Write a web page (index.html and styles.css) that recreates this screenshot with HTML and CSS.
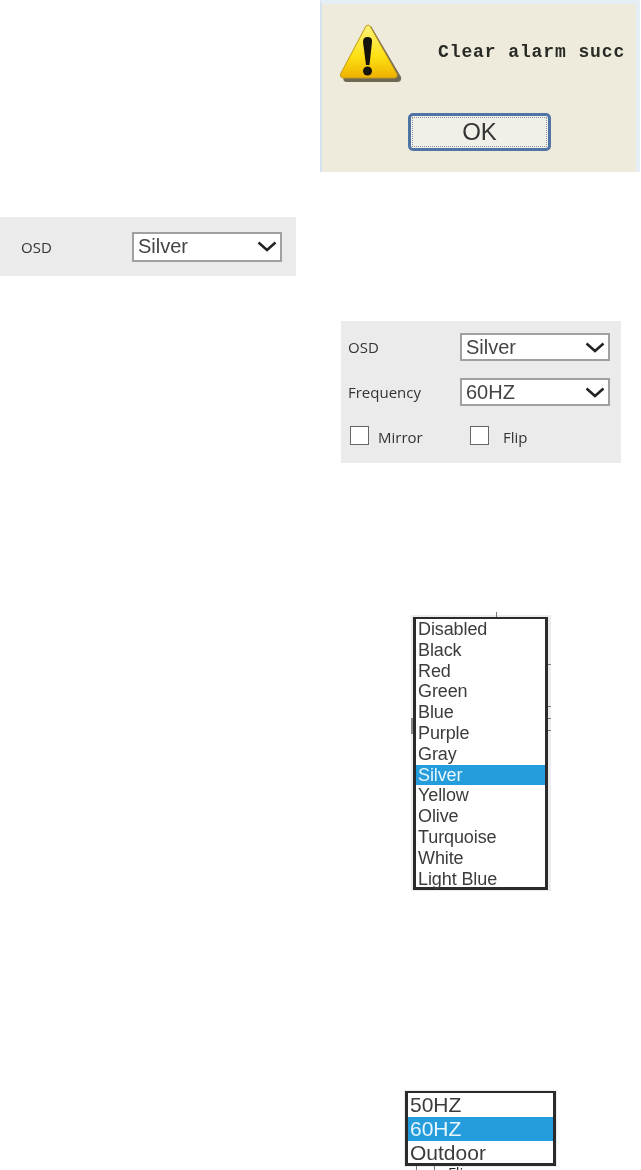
FILE: index.html
```html
<!DOCTYPE html>
<html lang="en">
<head>
  <meta charset="UTF-8" />
  <title>OSD settings</title>
  <link rel="stylesheet" href="styles.css">
</head>
<body>

  <!-- Alarm dialog -->
  <div class="dialog">
    <div class="dialog-top">
      <svg class="warn-icon" width="66" height="66" viewBox="0 0 66 66">
        <defs>
          <linearGradient id="warnFill" x1="0" y1="0" x2="0" y2="1">
            <stop offset="0" stop-color="#fff27a" />
            <stop offset="0.6" stop-color="#fde012" />
            <stop offset="1" stop-color="#eeb000" />
          </linearGradient>
        </defs>
        <path d="M33 4 L63 55 Q64 60 59 60 L8 60 Q4 59 6 55 Z" fill="#4d4630" opacity="0.8" />
        <path d="M28 4 Q30 2 32 4 L59 52 Q60 56 56 56 L5 56 Q1 55 3 51 Z" fill="url(#warnFill)" stroke="#c29a18" stroke-width="1" />
        <path d="M25 20 Q25 15 29.500 15 Q34.500 15 34 20 L31.500 43 L28 43 Z" fill="#15130c" />
        <circle cx="29.500" cy="49" r="4.500" fill="#15130c" />
      </svg>
      <span class="dialog-msg">Clear alarm succ</span>
    </div>
    <div class="ok-btn"><span class="ok-inner">OK</span></div>
  </div>

  <!-- OSD only -->
  <div class="panel panel-small">
    <span class="lbl">OSD</span>
    <div class="select">
      <span>Silver</span>
      <svg width="20" height="11" viewBox="0 0 20 11"><path d="M1.500 1.500 L10 9 L18.500 1.500" fill="none" stroke="#222" stroke-width="2.500" /></svg>
    </div>
  </div>

  <!-- OSD + frequency -->
  <div class="panel panel-big">
    <div class="row">
      <span class="lbl">OSD</span>
      <div class="select">
        <span>Silver</span>
        <svg width="20" height="11" viewBox="0 0 20 11"><path d="M1.500 1.500 L10 9 L18.500 1.500" fill="none" stroke="#222" stroke-width="2.500" /></svg>
      </div>
    </div>
    <div class="row">
      <span class="lbl">Frequency</span>
      <div class="select">
        <span>60HZ</span>
        <svg width="20" height="11" viewBox="0 0 20 11"><path d="M1.500 1.500 L10 9 L18.500 1.500" fill="none" stroke="#222" stroke-width="2.500" /></svg>
      </div>
    </div>
    <div class="checks">
      <span class="check"></span><span class="lbl mirror">Mirror</span>
      <span class="check"></span><span class="lbl flip">Flip</span>
    </div>
  </div>

  <!-- Colour dropdown -->
  <div class="list-wrap list-wrap-colors">
    <i class="tick tick-top"></i>
    <i class="tick tick-r1"></i>
    <i class="tick tick-r2"></i>
    <i class="tick tick-r3"></i>
    <i class="tick tick-r4"></i>
    <i class="tick tick-l"></i>
    <div class="list list-colors">
      <div class="opt">Disabled</div>
      <div class="opt">Black</div>
      <div class="opt">Red</div>
      <div class="opt">Green</div>
      <div class="opt">Blue</div>
      <div class="opt">Purple</div>
      <div class="opt">Gray</div>
      <div class="opt active">Silver</div>
      <div class="opt">Yellow</div>
      <div class="opt">Olive</div>
      <div class="opt">Turquoise</div>
      <div class="opt">White</div>
      <div class="opt">Light Blue</div>
    </div>
  </div>

  <!-- Frequency dropdown -->
  <div class="list-wrap list-wrap-freq">
    <div class="list list-freq">
      <div class="opt">50HZ</div>
      <div class="opt active">60HZ</div>
      <div class="opt">Outdoor</div>
    </div>
    <i class="tick tick-b1"></i>
    <i class="tick tick-b2"></i>
    <span class="cut-label">Flip</span>
  </div>

</body>
</html>
```

FILE: styles.css
```css
html, body {
  height: 1170px;
  overflow: hidden;
}
body {
  margin: 0;
  background: #fff;
  font-family: 'Liberation Sans', Arial, sans-serif;
  color: #333;
}

/* Alarm dialog */
.dialog {
  box-sizing: border-box;
  width: 320px;
  height: 172px;
  margin-left: 320px;
  background: #eeebdd;
  border-top: 4px solid #e4eef4;
  border-left: 2px solid #d3e2ee;
  border-right: 4px solid #e4eef4;
  filter: blur(0.5px);
}
.dialog-top {
  display: flex;
  align-items: flex-start;
  height: 109px;
}
.warn-icon {
  margin: 18px 0 0 16px;
}
.dialog-msg {
  margin: 36px 0 0 34px;
  font-family: 'Liberation Mono', monospace;
  font-size: 18px;
  font-weight: bold;
  letter-spacing: 0.9px;
  line-height: 24px;
  color: #2b2b26;
  white-space: nowrap;
}
.ok-btn {
  box-sizing: border-box;
  width: 143px;
  height: 38px;
  margin-left: 86px;
  border: 3px solid #4f74a3;
  border-radius: 5px;
  background: #f1f0e8;
  padding: 1px;
}
.ok-inner {
  display: block;
  height: 100%;
  border: 1px dotted #8a93a3;
  box-sizing: border-box;
  text-align: center;
  font-size: 24px;
  line-height: 28px;
  color: #333;
}

/* Grey settings panels */
.panel {
  background: #ebebeb;
  box-sizing: border-box;
  filter: blur(0.4px);
}
.panel-small {
  display: flex;
  align-items: center;
  width: 296px;
  height: 59px;
  margin-top: 45px;
  padding: 0 14px 0 21px;
}
.panel-small .lbl {
  width: 111px;
}
.panel-big {
  width: 280px;
  height: 142px;
  margin: 45px 0 0 341px;
  padding: 12px 11px 0 7px;
}
.row {
  display: flex;
  align-items: center;
  height: 28px;
  margin-bottom: 17px;
}
.row .lbl {
  width: 112px;
}
.lbl {
  font-family: 'Open Sans', sans-serif;
  font-size: 15px;
  color: #333;
}
.select {
  box-sizing: border-box;
  display: flex;
  align-items: center;
  justify-content: space-between;
  width: 150px;
  height: 30px;
  padding: 0 3px 0 4px;
  background: #fff;
  border: 2px solid #a0a0a0;
  font-size: 20px;
  color: #444;
}
.panel-big .select {
  height: 28px;
}
.checks {
  display: flex;
  align-items: center;
  margin: 2px 0 0 2px;
}
.check {
  box-sizing: border-box;
  width: 19px;
  height: 19px;
  background: #fff;
  border: 1px solid #666;
}
.mirror {
  margin: 4px 0 0 9px;
  width: 92px;
}
.flip {
  margin: 4px 0 0 14px;
}

/* Dropdown lists */
.list-wrap {
  box-sizing: border-box;
  position: relative;
  background: #ececec;
  filter: blur(0.4px);
}
.list-wrap-colors {
  width: 140px;
  height: 276px;
  margin: 152px 0 0 411px;
  padding: 2px 3px 0 2px;
}
.list-wrap-freq {
  width: 153px;
  height: 77px;
  margin: 199px 0 0 404px;
  padding: 1px 1px 0 1px;
}
.list {
  box-sizing: border-box;
  background: #fff;
  border: 3px solid #2b2b2b;
}
.list-colors {
  height: 273px;
  border-top-width: 2px;
  font-size: 18px;
  line-height: 20.8px;
  letter-spacing: -0.1px;
}
.list-freq {
  height: 75px;
  border-top-width: 2px;
  font-size: 21px;
  line-height: 24px;
}
.opt {
  padding-left: 2px;
  color: #3c3c3c;
  white-space: nowrap;
}
.opt.active {
  background: #259cdb;
  color: #e8f6fd;
}

/* bits of the picture behind the lists */
.tick {
  position: absolute;
  background: #777;
}
.tick-top { left: 85px; top: -3px; width: 1px; height: 5px; }
.tick-r1 { right: 0; top: 49px; width: 3px; height: 1px; }
.tick-r2 { right: 0; top: 91px; width: 3px; height: 1px; }
.tick-r3 { right: 0; top: 103px; width: 3px; height: 1px; }
.tick-r4 { right: 0; top: 115px; width: 3px; height: 1px; }
.tick-l { left: 0; top: 103px; width: 2px; height: 16px; background: #888; }
.tick-b1 { left: 12px; top: 76px; width: 1px; height: 6px; }
.tick-b2 { left: 30px; top: 76px; width: 1px; height: 6px; }
.cut-label {
  position: absolute;
  left: 44px;
  top: 75px;
  font-family: 'Open Sans', sans-serif;
  font-size: 15px;
  line-height: 15px;
  color: #222;
}
```
